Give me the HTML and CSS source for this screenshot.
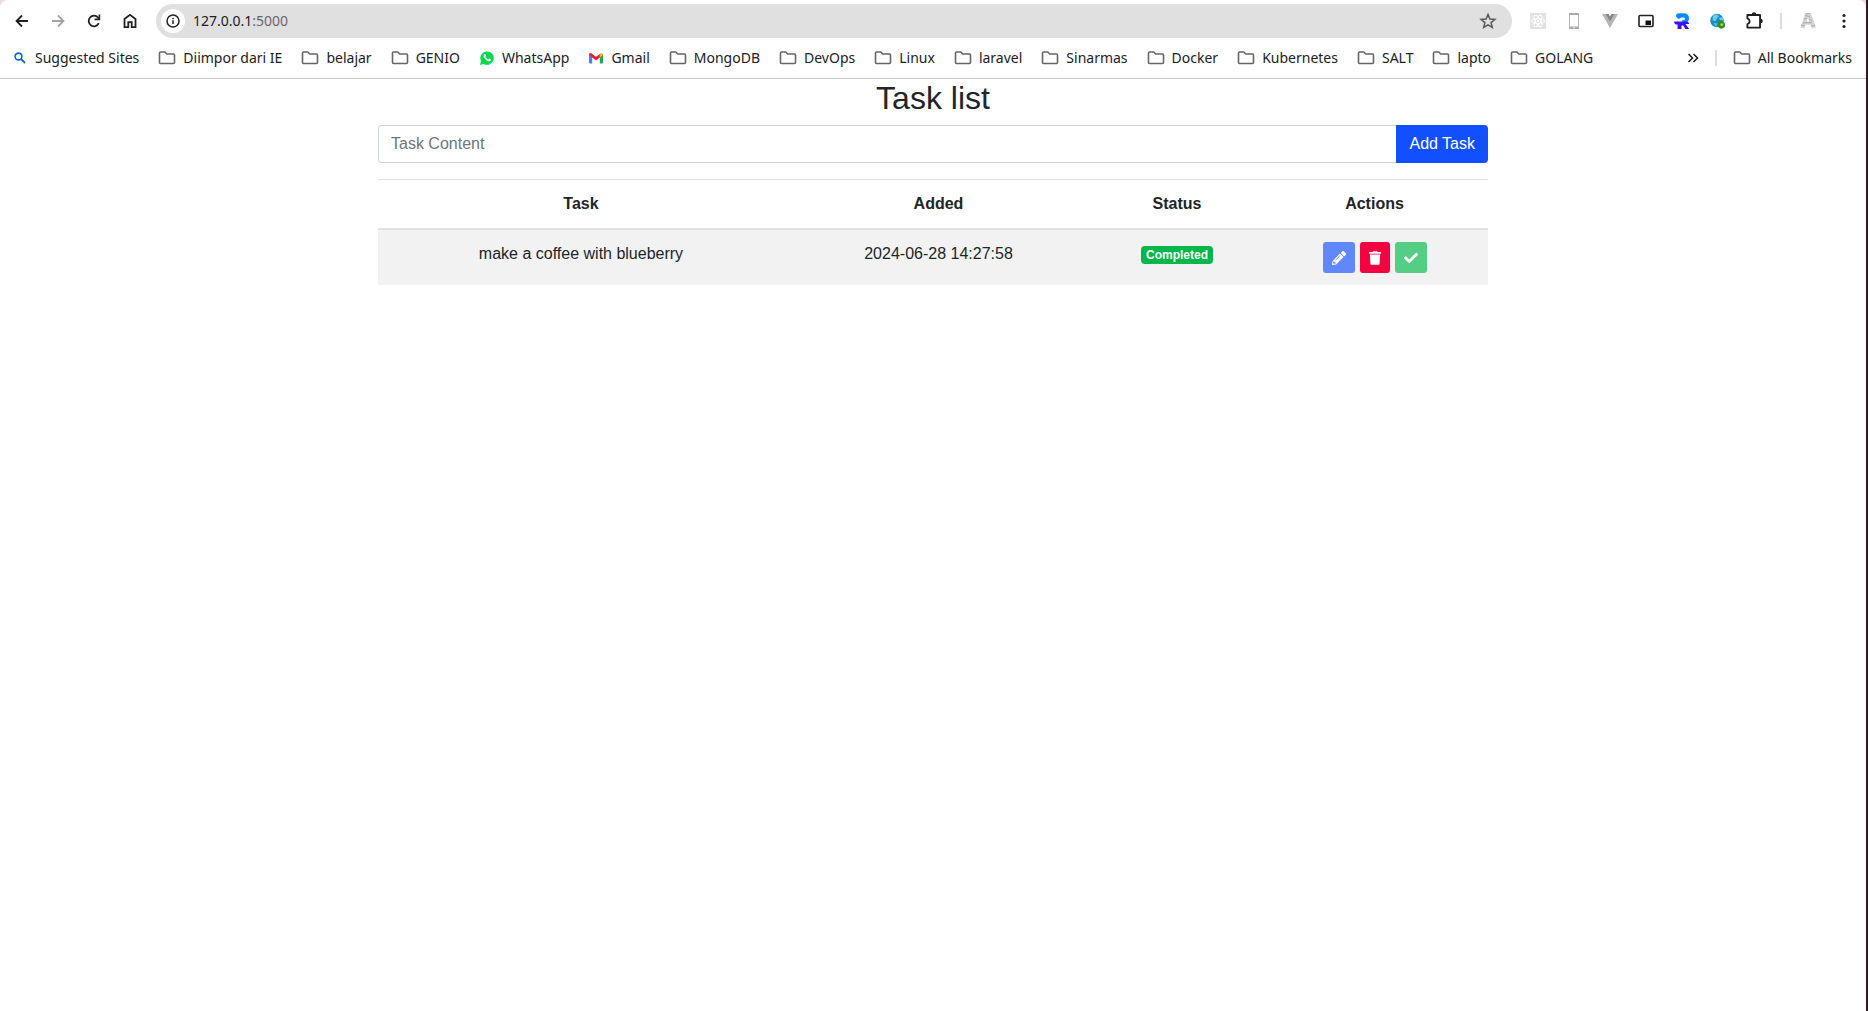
FILE: index.html
```html
<!DOCTYPE html>
<html lang="en">
<head>
<meta charset="utf-8">
<title>Task list</title>
<link rel="stylesheet" href="styles.css">
</head>
<body>
<svg class="sprite" aria-hidden="true">
  <symbol id="folder" viewBox="0 0 18 16"><path d="M2.500 2h4.300l1.900 2h6.800q1 0 1 1v7.500q0 1-1 1h-13q-1 0-1-1V3q0-1 1-1z" fill="none" stroke="#666" stroke-width="1.600"/></symbol>
</svg>
<div class="window">
  <header class="chrome">
    <div class="toolbar">
      <div class="group">
        <button class="tool" aria-label="Back"><svg width="20" height="20" viewBox="0 0 20 20"><path d="M16 10H5M10 4.500L4.500 10l5.500 5.500" fill="none" stroke="#202124" stroke-width="1.800"/></svg></button>
        <button class="tool" aria-label="Forward"><svg width="20" height="20" viewBox="0 0 20 20"><path d="M4 10h11M10 4.500l5.500 5.500-5.500 5.500" fill="none" stroke="#a3a3a3" stroke-width="1.800"/></svg></button>
        <button class="tool" aria-label="Reload"><svg width="20" height="20" viewBox="0 0 20 20"><path d="M14.800 12.200a5.300 5.300 0 1 1-.8-5.700l1.200 1.500" fill="none" stroke="#202124" stroke-width="1.800"/><path d="M16.200 3.600v5.600h-5.600V7.600h4V3.600z" fill="#202124"/></svg></button>
        <button class="tool" aria-label="Home"><svg width="20" height="20" viewBox="0 0 20 20"><path d="M4.500 16.200V8L10 3.900 15.500 8v8.200h-3.800v-5H8.300v5z" fill="none" stroke="#202124" stroke-width="1.800"/></svg></button>
      </div>
      <div class="omnibox">
        <span class="site-info"><svg width="16" height="16" viewBox="0 0 16 16"><circle cx="8" cy="8" r="6" fill="none" stroke="#202124" stroke-width="1.500"/><path d="M8 7.200V11M8 4.800v1.400" stroke="#202124" stroke-width="1.500"/></svg></span>
        <span class="url">127.0.0.1<span class="port">:5000</span></span>
        <button class="star" aria-label="Bookmark this page"><svg width="20" height="20" viewBox="0 0 20 20"><path d="M10 3.400l1.900 4.600 5 .4-3.800 3.200 1.200 4.900-4.300-2.600-4.300 2.600 1.200-4.900L3.100 8.400l5-.4z" fill="none" stroke="#5a5a5a" stroke-width="1.500"/></svg></button>
      </div>
      <div class="group">
        <button class="tool" aria-label="React tools"><svg width="16" height="16" viewBox="0 0 16 16"><path d="M0 0h16v16H0z" fill="#e2e2e2"/><g fill="none" stroke="#fff"><ellipse cx="8" cy="8" rx="6.500" ry="2.500"/><ellipse cx="8" cy="8" rx="6.500" ry="2.500" transform="rotate(60 8 8)"/><ellipse cx="8" cy="8" rx="6.500" ry="2.500" transform="rotate(120 8 8)"/></g><circle cx="8" cy="8" r="1.200" fill="#fff"/></svg></button>
        <button class="tool" aria-label="Mobile view"><svg width="16" height="16" viewBox="0 0 16 16"><path d="M3.500 0h9v16h-9z" fill="#fff" stroke="#b5b5b5"/><path d="M3 0h10v2H3zM3 13.500h10V16H3z" fill="#aaa"/><circle cx="8" cy="14.700" r=".8" fill="#fff"/></svg></button>
        <button class="tool" aria-label="Vue tools"><svg width="16" height="16" viewBox="0 0 16 16"><path d="M0 1h3.500L8 9l4.500-8H16L8 15z" fill="#b4b4b4"/><path d="M3.500 1h3L8 3.600 9.500 1h3L8 9z" fill="#858585"/></svg></button>
        <button class="tool" aria-label="Picture in picture"><svg width="16" height="16" viewBox="0 0 16 16"><rect x="1" y="2.500" width="14" height="11" rx="1" fill="none" stroke="#202124" stroke-width="1.600"/><path d="M7.500 7.500H13V12H7.500z" fill="#111"/></svg></button>
        <button class="tool" aria-label="Requestly"><svg width="16" height="16" viewBox="0 0 16 16"><path d="M2 3Q2.200.3 5 .3h5.300q4.700.4 4.700 4.900a4.300 4.300 0 0 1-3 4.300H8.300V7H10q1.200-.2 1.200-1.200T10 4.600H7Q6 6.300 4.200 5.600 2 4.900 2 3z" fill="#078afa"/><path d="M0 8.500h12q3 .2 3.200 2.500h-3.700l3.700 5h-4l-2-3.600H7.500V16H3.500v-4.500H2Q.3 11 0 8.500z" fill="#3b13ef"/></svg></button>
        <button class="tool" aria-label="Web proxy"><svg width="16" height="16" viewBox="0 0 16 16"><circle cx="7" cy="7.500" r="6.800" fill="#168fc5"/><path d="M3 2.500l4-1.300 2 2-2 2-1.500 3-3-1zM9 5l3.500-1 1 3-3 1zM4 10l3 .5-1 3z" fill="#70cce5"/><path d="M8 9.500l3.500-2.800 1 1.700a4 4 0 0 1 2.600 4.500 4 4 0 0 1-5.500 2.400 4 4 0 0 1-1.600-4z" fill="#398b18"/><circle cx="11.800" cy="11.700" r="1.400" fill="#a8d960"/></svg></button>
        <button class="tool" aria-label="Extensions"><svg width="22" height="22" viewBox="0 0 20 20"><path d="M4 4.500h11.500v11.500H4v-3.200q2-.6 2-2.500T4 7.700z" fill="none" stroke="#202124" stroke-width="1.700" stroke-linejoin="round"/><path d="M8 4a2 2 0 0 1 4 0zM16 8a2 2 0 0 1 0 4z" fill="#202124"/></svg></button>
        <span class="rule"></span>
        <button class="tool" aria-label="Profile"><svg width="18" height="18" viewBox="0 0 18 18"><path d="M6.300 1h5.400L17 15.500l-4 1-1.500-4h-5l-1 4-4-1zM9 6L7.500 9.500h3z" fill="#d4d4d4"/><path d="M6 3.500l5 1M5 7l3-1M10 7l3 1.500M4 11l9-.5M2 13l4 1M12 14l4-.5M7 2l4-.5" stroke="#999" stroke-width=".7"/></svg></button>
        <button class="tool" aria-label="Menu"><svg width="20" height="20" viewBox="0 0 20 20" fill="#202124"><circle cx="10" cy="4.500" r="1.600"/><circle cx="10" cy="10" r="1.600"/><circle cx="10" cy="15.500" r="1.600"/></svg></button>
      </div>
    </div>
    <nav class="bookmarks" aria-label="Bookmarks">
      <a class="mark" href="#"><svg width="16" height="16" viewBox="0 0 16 16"><circle cx="6.500" cy="6.500" r="3.400" fill="none" stroke="#0a66c8" stroke-width="1.600"/><path d="M9 9l4 4" stroke="#0a66c8" stroke-width="1.800"/></svg>Suggested Sites</a>
      <a class="mark" href="#"><svg width="18" height="16"><use href="#folder"/></svg>Diimpor dari IE</a>
      <a class="mark" href="#"><svg width="18" height="16"><use href="#folder"/></svg>belajar</a>
      <a class="mark" href="#"><svg width="18" height="16"><use href="#folder"/></svg>GENIO</a>
      <a class="mark" href="#"><svg width="16" height="16" viewBox="0 0 16 16"><path d="M1 15l1-4a6.700 6.700 0 1 1 2.700 2.900z" fill="#00d950"/><path d="M5.300 4.300q.8-.8 1.300.2l.5 1.200q0 .4-.7 1 .9 1.900 2.900 2.700l1-.9 1.700.9q.2 1.300-1.200 1.800-1.400.4-3.600-1.200Q4.800 8.200 4.600 6.300q-.1-1.200.7-2z" fill="#fff"/></svg>WhatsApp</a>
      <a class="mark" href="#"><svg width="16" height="16" viewBox="0 0 16 16"><path d="M1 4.500l3.200 2.300V13.500H2q-1 0-1-1z" fill="#4285f4"/><path d="M15 4.500l-3.200 2.300V13.500H14q1 0 1-1z" fill="#20a650"/><path d="M11.800 4l1-.8q2.200-.9 2.200 1.600l-3.200 2.700z" fill="#fbbc04"/><path d="M1 4.800q0-2.500 2.200-1.600L8 6.800l3.800-2.800v3.600L8 10.400 4.200 7.600z" fill="#e91c32"/></svg>Gmail</a>
      <a class="mark" href="#"><svg width="18" height="16"><use href="#folder"/></svg>MongoDB</a>
      <a class="mark" href="#"><svg width="18" height="16"><use href="#folder"/></svg>DevOps</a>
      <a class="mark" href="#"><svg width="18" height="16"><use href="#folder"/></svg>Linux</a>
      <a class="mark" href="#"><svg width="18" height="16"><use href="#folder"/></svg>laravel</a>
      <a class="mark" href="#"><svg width="18" height="16"><use href="#folder"/></svg>Sinarmas</a>
      <a class="mark" href="#"><svg width="18" height="16"><use href="#folder"/></svg>Docker</a>
      <a class="mark" href="#"><svg width="18" height="16"><use href="#folder"/></svg>Kubernetes</a>
      <a class="mark" href="#"><svg width="18" height="16"><use href="#folder"/></svg>SALT</a>
      <a class="mark" href="#"><svg width="18" height="16"><use href="#folder"/></svg>lapto</a>
      <a class="mark" href="#"><svg width="18" height="16"><use href="#folder"/></svg>GOLANG</a>
      <div class="overflow">
        <button class="more" aria-label="More bookmarks"><svg width="12" height="12" viewBox="0 0 12 12"><path d="M1.500 2l4 4-4 4M6.500 2l4 4-4 4" fill="none" stroke="#202124" stroke-width="1.600"/></svg></button>
        <span class="rule"></span>
        <a class="mark" href="#"><svg width="18" height="16"><use href="#folder"/></svg>All Bookmarks</a>
      </div>
    </nav>
  </header>
  <main class="container">
    <h1 class="title">Task list</h1>
    <form class="add-task">
      <input class="task-input" type="text" placeholder="Task Content" aria-label="Task Content">
      <button class="add-button" type="submit">Add Task</button>
    </form>
    <table class="tasks">
      <thead>
        <tr><th>Task</th><th class="added">Added</th><th class="status">Status</th><th class="actions">Actions</th></tr>
      </thead>
      <tbody>
        <tr>
          <td>make a coffee with blueberry</td>
          <td>2024-06-28 14:27:58</td>
          <td><span class="badge">Completed</span></td>
          <td>
            <div class="buttons">
              <button class="action edit" aria-label="Edit"><svg width="14" height="14" viewBox="0 0 512 512"><path fill="#fff" d="M498 142l-46 46c-5 5-13 5-17 0L324 77c-5-5-5-12 0-17l46-46c19-19 49-19 68 0l60 60c19 19 19 49 0 68zm-214-42L22 362 0 485c-3 16 12 30 28 28l122-22 262-262c5-5 5-13 0-17L301 100c-4-5-12-5-17 0zM124 340c-5-6-5-14 0-20l154-154c6-5 14-5 20 0s5 14 0 20L144 340c-6 5-14 5-20 0zm-36 84h48v36l-64 12-32-31 12-65h36v48z"/></svg></button>
              <button class="action delete" aria-label="Delete"><svg width="12" height="14" viewBox="0 0 448 512"><path fill="#fff" d="M432 32H312l-9-19A24 24 0 0 0 281 0H167a24 24 0 0 0-22 13l-9 19H16A16 16 0 0 0 0 48v32a16 16 0 0 0 16 16h416a16 16 0 0 0 16-16V48a16 16 0 0 0-16-16zM53 467a48 48 0 0 0 48 45h246a48 48 0 0 0 48-45l21-339H32z"/></svg></button>
              <button class="action done" aria-label="Mark as completed"><svg width="14" height="14" viewBox="0 0 512 512"><path fill="#fff" d="M174 439L7 273c-9-10-9-26 0-36l37-36c10-10 26-10 36 0l112 112L432 73c10-10 26-10 36 0l37 36c9 10 9 26 0 36L210 439c-10 10-26 10-36 0z"/></svg></button>
            </div>
          </td>
        </tr>
      </tbody>
    </table>
  </main>
</div>
</body>
</html>
```
FILE: styles.css
```css
* { box-sizing: border-box; }

body {
  margin: 0;
  background: #fff;
  color: #212529;
  font: 16px/24px "Liberation Sans", Arial, sans-serif;
}

button { font: inherit; border: 0; padding: 0; cursor: pointer; }
a { color: inherit; text-decoration: none; }
svg { display: block; flex: none; }
.sprite { position: absolute; width: 0; height: 0; }

.window {
  min-height: 100vh;
  border-right: 2px solid #381420;
}

/* Browser toolbar */
.chrome {
  border-bottom: 1px solid #c8c8c8;
  background: #ecdcdc;
  color: #202124;
  font: 14px/20px "Noto Sans", "Open Sans", sans-serif;
}
.toolbar {
  display: flex;
  align-items: center;
  gap: 8px;
  height: 42px;
  padding: 0 4px;
  border-radius: 8px 8px 0 0;
  background: #fff;
}
.group { display: flex; align-items: center; }
.tool {
  display: flex;
  align-items: center;
  justify-content: center;
  width: 36px;
  height: 34px;
  background: none;
}
.omnibox {
  flex: 1;
  display: flex;
  align-items: center;
  gap: 8px;
  height: 34px;
  padding: 0 14px 0 5px;
  border-radius: 17px;
  background: #e0e0e0;
}
.site-info {
  display: flex;
  align-items: center;
  justify-content: center;
  width: 24px;
  height: 24px;
  border-radius: 50%;
  background: #fff;
}
.url { flex: 1; }
.port { color: #666; }
.star { background: none; }
.rule {
  width: 2px;
  height: 16px;
  margin: 0 8px;
  background: #e6dad8;
}

/* Bookmarks bar */
.bookmarks {
  display: flex;
  align-items: center;
  gap: 19px;
  height: 36px;
  padding: 0 14px 4px 12px;
  background: #fff;
  white-space: nowrap;
}
.mark { display: flex; align-items: center; gap: 7px; }
.overflow { display: flex; align-items: center; gap: 8px; margin-left: auto; }
.more { background: none; }

/* Task page */
.container {
  max-width: 1140px;
  margin: 0 auto;
  padding: 0 15px;
}
.title {
  margin: 0 0 8px;
  font-size: 32px;
  font-weight: 400;
  line-height: 38px;
  text-align: center;
}
.add-task { display: flex; margin: 0 0 16px; }
.task-input {
  flex: 1;
  min-width: 0;
  height: 38px;
  padding: 6px 12px;
  border: 1px solid #ced4da;
  border-right: 0;
  border-radius: 4px 0 0 4px;
  color: #495057;
  font: inherit;
}
.task-input::placeholder { color: #6c757d; opacity: 1; }
.add-button {
  padding: 0 13px;
  border-radius: 0 4px 4px 0;
  background: #1250ff;
  color: #fff;
}
.tasks {
  width: 100%;
  border-collapse: separate;
  border-spacing: 0;
  text-align: center;
  table-layout: fixed;
}
.tasks th {
  padding: 12px;
  border-top: 1px solid #dee2e6;
  border-bottom: 2px solid #dee2e6;
}
.tasks td {
  padding: 12px;
  background: #f2f2f2;
  vertical-align: top;
}
.added { width: 309px; }
.status { width: 168px; }
.actions { width: 227px; }
.badge {
  display: inline-block;
  padding: 3px 5px;
  border-radius: 4px;
  background: #00b74a;
  color: #fff;
  font-size: 12px;
  font-weight: 700;
  line-height: 12px;
}
.buttons { display: flex; justify-content: center; gap: 5px; }
.action {
  display: flex;
  align-items: center;
  height: 31px;
  padding: 0 9px;
  border-radius: 3px;
}
.edit { background: #6088fa; }
.delete { background: #f50041; }
.done { background: #55ce85; }
```
